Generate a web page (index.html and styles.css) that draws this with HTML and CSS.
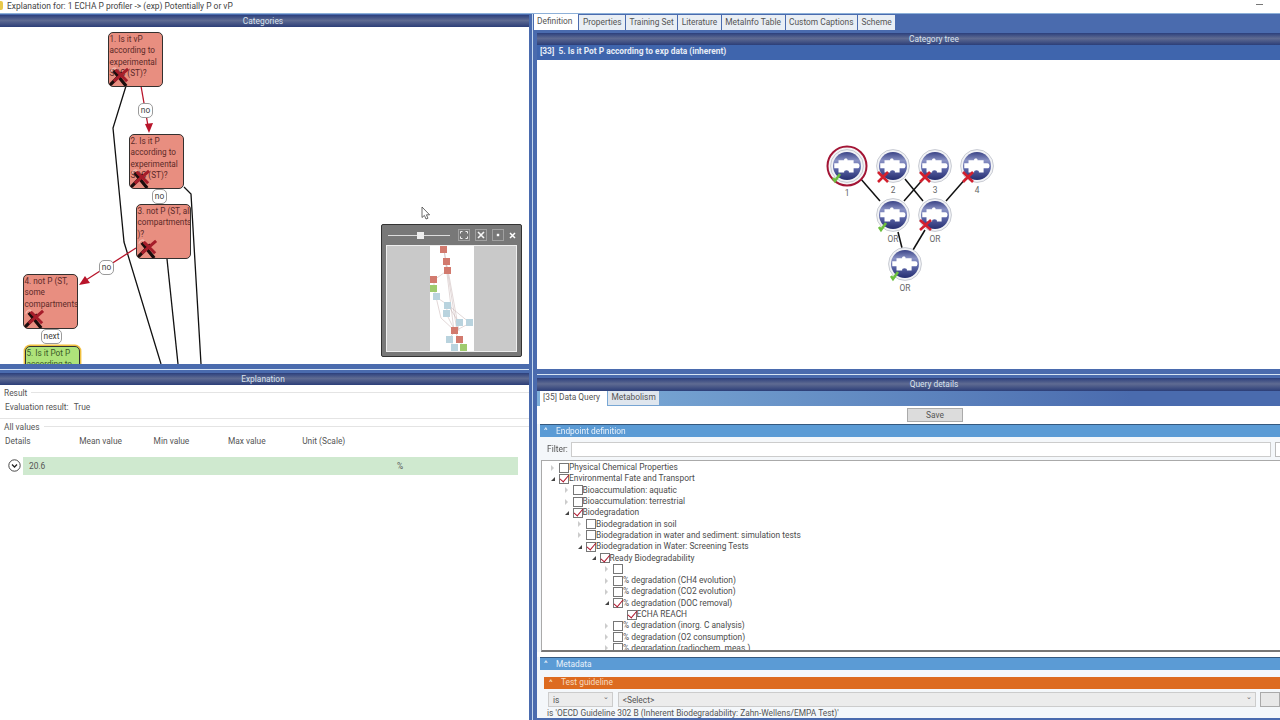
FILE: index.html
```html
<!DOCTYPE html>
<html lang="en">
<head>
<meta charset="utf-8">
<title>Explanation</title>
<link rel="stylesheet" href="styles.css">
</head>
<body>
<svg class="defs" width="0" height="0" aria-hidden="true">
  <defs>
    <symbol id="redx" viewBox="0 0 24 22">
      <path d="M3 6 C4 1 9 1 10 5" fill="none" stroke="#f6d8d0" stroke-width="0.9"/>
      <path d="M1 21 L15 7 M6 5 L19 21" fill="none" stroke="#1c0d0d" stroke-width="3.4"/>
      <path d="M6 16 L21 3 M8 4 L20 16" fill="none" stroke="#a51d2a" stroke-width="3.2"/>
    </symbol>
    <linearGradient id="orb" x1="0" y1="0" x2="0" y2="1">
      <stop offset="0" stop-color="#3a4386"/>
      <stop offset="0.3" stop-color="#8a92c4"/>
      <stop offset="0.6" stop-color="#5a64a6"/>
      <stop offset="1" stop-color="#262e70"/>
    </linearGradient>
    <symbol id="orbnode" viewBox="0 0 36 36">
      <circle cx="18" cy="18" r="17.4" fill="#f2f3f6" stroke="#b8bcc6" stroke-width="0.8"/>
      <circle cx="18" cy="18" r="14.8" fill="url(#orb)"/>
      <path d="M4.5 15 H9 V12 H15 C14 9.5 19.5 9.5 18.5 12 H25 V15 H29 C32 15 32 20.5 29 20.5 H25 V25 H20 C21 21.5 14 21.5 15 25 H9 V20.5 H4.5 Z" fill="#fff"/>
    </symbol>
  </defs>
</svg>
<div class="app">
  <div class="titlebar">
    <span class="appicon"></span>
    <span class="titletext">Explanation for: 1 ECHA P profiler -&gt; (exp) Potentially P or vP</span>
    <span class="minimize"></span>
  </div>
  <div class="workspace">
    <div class="leftcol">
      <div class="topgap"></div>
      <div class="header lefthead">Categories</div>
      <div class="canvas">
        <svg class="edges" width="529" height="337" viewBox="0 27 529 337">
          <polyline class="edge" points="126,86 113,128 119,190 124,242 161,364"/>
          <polyline class="edge" points="184,187 191,194 201,364"/>
          <polyline class="edge" points="167,259 178,364"/>
          <polyline class="redge" points="141,86 148,126"/>
          <polygon class="rhead" points="145,124 153,123 149,133"/>
          <polyline class="redge" points="136,248 86,280"/>
          <polygon class="rhead" points="79,285 85,276 90,283"/>
        </svg>
        <div class="node nred n1">1. Is it vP<br>according to<br>experimental<br>SOC (ST)?<svg class="xmark"><use href="#redx"/></svg></div>
        <div class="node nred n2">2. Is it P<br>according to<br>experimental<br>SOC (ST)?<svg class="xmark"><use href="#redx"/></svg></div>
        <div class="node nred n3">3. not P (ST, all<br>compartments<br>)?<svg class="xmark"><use href="#redx"/></svg></div>
        <div class="node nred n4">4. not P (ST,<br>some<br>compartments<svg class="xmark"><use href="#redx"/></svg></div>
        <div class="node ngreen n5">5. Is it Pot P<br>according to</div>
        <div class="elabel lb1">no</div>
        <div class="elabel lb2">no</div>
        <div class="elabel lb3">no</div>
        <div class="elabel lb4">next</div>
        <svg class="cursor" width="10" height="14" viewBox="0 0 10 14"><path d="M1 1 V11.5 L3.4 9.4 L5 13 L7 12.2 L5.4 8.8 H8.6 Z" fill="#fff" stroke="#444" stroke-width="0.8"/></svg>
        <div class="minimap">
          <div class="mmbar">
            <span class="mmtrack"><span class="mmthumb"></span></span>
            <span class="mmbtn"><svg width="10" height="10" viewBox="0 0 10 10"><path d="M1.5 3.5 V1.5 H3.5 M6.5 1.5 H8.5 V3.5 M8.5 6.5 V8.5 H6.5 M3.5 8.5 H1.5 V6.5" fill="none" stroke="#f2f2f2" stroke-width="1"/></svg></span>
            <span class="mmbtn"><svg width="10" height="10" viewBox="0 0 10 10"><path d="M2 2 L8 8 M8 2 L2 8" fill="none" stroke="#f6f6f6" stroke-width="1.6"/></svg></span>
            <span class="mmbtn"><svg width="10" height="10" viewBox="0 0 10 10"><rect x="3.8" y="3.8" width="2.4" height="2.4" fill="#fff"/></svg></span>
            <span class="mmclose"><svg width="7" height="7" viewBox="0 0 7 7"><path d="M1 1 L6 6 M6 1 L1 6" fill="none" stroke="#fff" stroke-width="1.5"/></svg></span>
          </div>
          <div class="mmview">
            <svg class="mmgraph" width="44" height="107" viewBox="0 0 44 107">
              <g class="mmlines">
                <path d="M14 3 L16 16 L18 24 L4 34 M14 3 L24 85 M16 16 L27 85 M18 24 L29 85 M4 34 L4 42 L6 51 L18 59 L16 67 L25 85 M6 51 L11 72 L25 85 M18 59 L29 77 L25 85 M18 59 L40 77 L25 85 M25 85 L19 93 L25 102 M25 85 L29 94 L34 102"/>
              </g>
              <rect class="mr" x="10" y="0" width="7" height="7"/>
              <rect class="mr" x="13" y="12" width="7" height="7"/>
              <rect class="mr" x="14" y="21" width="7" height="7"/>
              <rect class="mr" x="0" y="30" width="7" height="7"/>
              <rect class="mg" x="0" y="39" width="7" height="7"/>
              <rect class="mb" x="3" y="47" width="7" height="7"/>
              <rect class="mb" x="14" y="56" width="7" height="7"/>
              <rect class="mb" x="13" y="64" width="7" height="7"/>
              <rect class="mb" x="26" y="73" width="7" height="7"/>
              <rect class="mb" x="36" y="73" width="7" height="7"/>
              <rect class="mr" x="21" y="81" width="7" height="7"/>
              <rect class="mb" x="16" y="90" width="7" height="7"/>
              <rect class="mr" x="26" y="90" width="7" height="7"/>
              <rect class="mb" x="21" y="98" width="7" height="7"/>
              <rect class="mg" x="30" y="98" width="7" height="7"/>
            </svg>
          </div>
        </div>
      </div>
      <div class="splitter leftsplit"></div>
      <div class="header lefthead">Explanation</div>
      <div class="explain">
        <div class="legend"><span>Result</span><i></i></div>
        <div class="evalrow"><span>Evaluation result:</span><span>True</span></div>
        <div class="legend second"><span>All values</span><i></i></div>
        <div class="cols">
          <span>Details</span><span>Mean value</span><span>Min value</span><span>Max value</span><span>Unit (Scale)</span>
        </div>
        <div class="valuerow">
          <span class="expander"><svg width="13" height="13" viewBox="0 0 13 13"><circle cx="6.5" cy="6.5" r="5.7" fill="#fff" stroke="#333" stroke-width="0.9"/><path d="M4 5.5 L6.5 8 L9 5.5" fill="none" stroke="#222" stroke-width="1.3"/></svg></span>
          <div class="valuebar"><span class="val">20.6</span><span class="unit">%</span></div>
        </div>
      </div>
    </div>
    <div class="vsplit"></div>
    <div class="rightcol">
      <div class="tabs">
        <span class="tab active">Definition</span>
        <span class="tab">Properties</span>
        <span class="tab">Training Set</span>
        <span class="tab">Literature</span>
        <span class="tab">MetaInfo Table</span>
        <span class="tab">Custom Captions</span>
        <span class="tab">Scheme</span>
      </div>
      <div class="header rheader">Category tree</div>
      <div class="pagetitle">[33]&nbsp; 5. Is it Pot P according to exp data (inherent)</div>
      <div class="treecanvas">
        <svg class="tree" width="743" height="309" viewBox="537 60 743 309">
          <g class="tedge">
            <line x1="860" y1="178" x2="880" y2="201"/>
            <line x1="905" y1="179" x2="923" y2="201"/>
            <line x1="925" y1="177" x2="904" y2="201"/>
            <line x1="967" y1="177" x2="946" y2="201"/>
            <line x1="898" y1="232" x2="902" y2="248"/>
            <line x1="925" y1="230" x2="913" y2="250"/>
          </g>
          <circle class="ring" cx="847" cy="166" r="19.5"/>
          <use href="#orbnode" x="830" y="149" width="34" height="34"/>
          <use href="#orbnode" x="876" y="149" width="34" height="34"/>
          <use href="#orbnode" x="918" y="149" width="34" height="34"/>
          <use href="#orbnode" x="960" y="149" width="34" height="34"/>
          <use href="#orbnode" x="876" y="198" width="34" height="34"/>
          <use href="#orbnode" x="918" y="198" width="34" height="34"/>
          <use href="#orbnode" x="888" y="247" width="34" height="34"/>
          <g class="redmark">
            <path d="M878 172 L888 182 M888 172 L878 182"/>
            <path d="M920 172 L930 182 M930 172 L920 182"/>
            <path d="M963 172 L973 182 M973 172 L963 182"/>
            <path d="M920 220 L931 230 M931 220 L920 230"/>
          </g>
          <g class="greenmark">
            <path d="M833 178 L835 181 L840 174"/>
            <path d="M879 227 L881 230 L886 223"/>
            <path d="M891 276 L893 279 L898 272"/>
          </g>
          <text x="847" y="196">1</text>
          <text x="893" y="193">2</text>
          <text x="935" y="193">3</text>
          <text x="977" y="193">4</text>
          <text x="893" y="242">OR</text>
          <text x="935" y="242">OR</text>
          <text x="905" y="291">OR</text>
        </svg>
      </div>
      <div class="splitter rsplit"></div>
      <div class="header rheader2">Query details</div>
      <div class="qtabs">
        <span class="qtab active">[35] Data Query</span>
        <span class="qtab">Metabolism</span>
      </div>
      <div class="saverow"><span class="savebtn">Save</span></div>
      <div class="section">
        <div class="sechead"><span class="caret">^</span>Endpoint definition</div>
        <div class="filter">
          <span class="filterlabel">Filter:</span><span class="filterinput"></span><span class="filterbtn"></span>
        </div>
        <div class="treebox">
          <div class="row lv0"><i class="arr"></i><b class="cb"></b>Physical Chemical Properties</div>
          <div class="row lv0"><i class="arr open"></i><b class="cb on"></b>Environmental Fate and Transport</div>
          <div class="row lv1"><i class="arr"></i><b class="cb"></b>Bioaccumulation: aquatic</div>
          <div class="row lv1"><i class="arr"></i><b class="cb"></b>Bioaccumulation: terrestrial</div>
          <div class="row lv1"><i class="arr open"></i><b class="cb on"></b>Biodegradation</div>
          <div class="row lv2"><i class="arr"></i><b class="cb"></b>Biodegradation in soil</div>
          <div class="row lv2"><i class="arr"></i><b class="cb"></b>Biodegradation in water and sediment: simulation tests</div>
          <div class="row lv2"><i class="arr open"></i><b class="cb on"></b>Biodegradation in Water: Screening Tests</div>
          <div class="row lv3"><i class="arr open"></i><b class="cb on"></b>Ready Biodegradability</div>
          <div class="row lv4"><i class="arr"></i><b class="cb"></b></div>
          <div class="row lv4"><i class="arr"></i><b class="cb"></b>% degradation (CH4 evolution)</div>
          <div class="row lv4"><i class="arr"></i><b class="cb"></b>% degradation (CO2 evolution)</div>
          <div class="row lv4"><i class="arr open"></i><b class="cb on"></b>% degradation (DOC removal)</div>
          <div class="row lv5"><i class="arr none"></i><b class="cb on"></b>ECHA REACH</div>
          <div class="row lv4"><i class="arr"></i><b class="cb"></b>% degradation (inorg. C analysis)</div>
          <div class="row lv4"><i class="arr"></i><b class="cb"></b>% degradation (O2 consumption)</div>
          <div class="row lv4"><i class="arr"></i><b class="cb"></b>% degradation (radiochem. meas.)</div>
        </div>
      </div>
      <div class="metasection">
        <div class="sechead"><span class="caret">^</span>Metadata</div>
        <div class="metabody">
          <div class="orange"><span class="caret">^</span>Test guideline</div>
          <div class="combos">
            <span class="combo small">is<em>⌄</em></span>
            <span class="combo wide">&lt;Select&gt;<em>⌄</em></span>
            <span class="combobtn"></span>
          </div>
          <div class="cond">is 'OECD Guideline 302 B (Inherent Biodegradability: Zahn-Wellens/EMPA Test)'</div>
        </div>
      </div>
    </div>
  </div>
</div>
</body>
</html>
```
FILE: styles.css
```css
* { box-sizing: border-box; }
html, body { margin: 0; padding: 0; }
body {
  width: 1280px;
  height: 720px;
  overflow: hidden;
  background: #fff;
  font-family: Roboto, "Open Sans", sans-serif;
  font-size: 8.4px;
  color: #555;
}
.defs { position: absolute; }
.app { width: 1280px; height: 720px; display: flex; flex-direction: column; filter: blur(0.3px); }
.titlebar { height: 13px; flex: none; display: flex; align-items: center; background: #fff; position: relative; }
.appicon { width: 3px; height: 9px; margin-top: -3px; margin-right: 4px; background: #e9c94a; border-radius: 0 2px 2px 0; }
.titletext { font-size: 8.45px; color: #444; margin-top: -1px; }
.minimize { position: absolute; right: 17px; top: 4px; width: 7px; height: 1px; background: #777; }

.workspace { flex: 1; min-height: 0; display: flex; background: #4a6bae; border-top: 1px solid #8db0d8; }
.leftcol { width: 529px; flex: none; display: flex; flex-direction: column; }
.vsplit { width: 8px; flex: none; background: linear-gradient(90deg, #4a6bae 0 3px, #c5d8ee 3px 4px, #4a6bae 4px); }
.rightcol { flex: 1; min-width: 0; display: flex; flex-direction: column; }
.topgap { height: 1px; flex: none; }
.header {
  height: 12px;
  flex: none;
  text-align: center;
  line-height: 13px;
  font-size: 8.4px;
  color: #d9e2ee;
  background: linear-gradient(#2b3f7c, #5f6b92 45%, #2c3e78);
}
.lefthead { padding-right: 3px; }
.canvas { height: 337px; flex: none; position: relative; overflow: hidden; background: #fff; }
.edges { position: absolute; left: 0; top: 0; }
.edge { fill: none; stroke: #111; stroke-width: 1.3; }
.redge { fill: none; stroke: #b8142a; stroke-width: 1.3; }
.rhead { fill: #b8142a; }
.node {
  position: absolute;
  width: 55px;
  height: 55px;
  padding: 1px 0 0 0.5px;
  border: 1.4px solid #33302f;
  border-radius: 5px;
  line-height: 11.3px;
  font-size: 8.2px;
  color: #5c2a28;
  overflow: hidden;
  white-space: nowrap;
}
.nred { background: #e88e80; }
.ngreen { background: #aee37a; color: #3b5a28; border: 1.2px solid #333; box-shadow: 0 0 0 1.4px #f0c040; }
.n1 { left: 108px; top: 5px; }
.n2 { left: 129px; top: 107px; }
.n3 { left: 136px; top: 177px; }
.n4 { left: 23px; top: 247px; }
.n5 { left: 25px; top: 319px; }
.xmark { position: absolute; left: -1px; bottom: -1px; width: 23px; height: 21px; }
.elabel {
  position: absolute;
  height: 15px;
  line-height: 13px;
  text-align: center;
  border: 1px solid #9a9a9a;
  border-radius: 5px;
  background: #fff;
  font-size: 8.4px;
  color: #444;
}
.lb1 { left: 138px; top: 76px; width: 15px; }
.lb2 { left: 152px; top: 162px; width: 15px; }
.lb3 { left: 99px; top: 233px; width: 15px; }
.lb4 { left: 41px; top: 302px; width: 21px; }
.cursor { position: absolute; left: 421px; top: 179px; }
.minimap {
  position: absolute;
  left: 381px;
  top: 197px;
  width: 141px;
  height: 133px;
  background: #787878;
  border: 1px solid #333;
  border-radius: 2px;
  display: flex;
  flex-direction: column;
  padding: 0 4px 4px 4px;
}
.mmbar { height: 20px; flex: none; display: flex; align-items: center; gap: 5px; padding-left: 2px; }
.mmtrack { width: 62px; height: 1px; background: #ddd; position: relative; margin-right: 3px; }
.mmthumb { position: absolute; left: 29px; top: -3px; width: 7px; height: 7px; background: #eee; }
.mmbtn { width: 12px; height: 12px; border: 1px solid #a0a0a0; display: flex; }
.mmclose { display: flex; margin-left: 0; }
.mmview { height: 107px; flex: none; border: 1px solid #eee; background: #c9c9c9; display: flex; justify-content: center; overflow: hidden; }
.mmgraph { background: #fff; display: block; flex: none; }
.mmlines path { fill: none; stroke: #c4b0b0; stroke-width: 0.5; }
.mr { fill: #d27a6e; }
.mg { fill: #9fcb6e; }
.mb { fill: #b9d3de; }

.splitter { height: 8px; flex: none; background: linear-gradient(#4a6bae 0 5px, #d7e5f4 5px 6px, #4a6bae 6px); }
.leftsplit { height: 9px; }
.explain { flex: 1; background: #fff; padding: 2px 11px 0 0; }
.legend { display: flex; align-items: center; gap: 4px; height: 11px; padding-left: 4px; }
.legend i { flex: 1; height: 1px; background: #e4e4e4; margin-right: -11px; }
.evalrow { display: flex; gap: 5px; height: 21px; padding: 3.5px 0 0 5px; border-bottom: 1px solid #e4e4e4; margin-right: -11px; }
.second { margin-top: 2px; }
.cols { display: grid; grid-template-columns: repeat(5, 74.3px); padding: 3.5px 0 0 5px; height: 17px; }
.valuerow { display: flex; align-items: center; height: 19px; margin-top: 7px; }
.expander { width: 23px; padding-left: 8px; display: flex; flex: none; }
.expander svg { flex: none; }
.valuebar { flex: 1; height: 18px; background: #cfe9cf; display: flex; align-items: center; padding-left: 6px; }
.val { width: 368px; }

.tabs { height: 17px; flex: none; display: flex; gap: 1px; align-items: flex-start; }
.tab { height: 15px; margin-top: 1px; padding: 0 3.5px; line-height: 14px; background: #e9eef4; font-size: 8.4px; white-space: nowrap; }
.tab.active { background: #fff; height: 16px; margin-top: 0; padding: 0 6px 0 3px; margin-left: -3px; }
.rheader { margin-top: 2px; padding-left: 51px; }
.pagetitle { height: 15px; flex: none; padding-left: 3px; line-height: 13px; font-size: 8.4px; font-weight: 700; color: #e6ecf6; background: #3f65ad; }
.treecanvas { height: 309px; flex: none; background: #fff; }
.tree { display: block; }
.tedge line { stroke: #111; stroke-width: 1.5; }
.ring { fill: #f4f4f6; stroke: #a31535; stroke-width: 2; }
.redmark path { fill: none; stroke: #d3202e; stroke-width: 2.6; }
.greenmark path { fill: none; stroke: #6cbf3e; stroke-width: 2.6; }
.tree text { font-size: 8.4px; fill: #666; text-anchor: middle; font-family: Roboto, sans-serif; }
.rsplit { height: 9px; }
.rheader2 { height: 13px; padding-left: 51px; }
.qtabs { height: 15px; flex: none; display: flex; gap: 1px; padding-left: 3px; background: linear-gradient(90deg, #7fb0da, #4a6bae 80%); }
.qtab { height: 14px; line-height: 13px; padding: 0 3.5px; background: #dfe6ee; font-size: 8.4px; white-space: nowrap; }
.qtab.active { width: 67px; height: 15px; background: #fff; padding: 0 3px; }
.saverow { height: 18px; flex: none; background: #fff; padding: 2px 0 0 370px; }
.savebtn { display: block; width: 56px; height: 14px; line-height: 12px; text-align: center; background: #dcdcdc; border: 1px solid #aaa; }
.section { flex: none; background: #f4f7fa; padding-left: 3px; }
.sechead { height: 13px; line-height: 12px; padding-left: 4px; color: #e8f1fa; background: #5b9bd5; border-top: 1px solid #35597f; font-size: 8.4px; display: flex; }
.caret { width: 12px; font-weight: 700; font-size: 8px; }
.filter { height: 23px; display: flex; align-items: center; padding: 1px 0 0 7px; }
.filterlabel { width: 24px; flex: none; }
.filterinput { width: 700px; flex: none; height: 15px; background: #fff; border: 1px solid #ccc; }
.filterbtn { width: 10px; height: 15px; margin-left: 4px; background: #fff; border: 1px solid #bbb; flex: none; }
.treebox { height: 192px; overflow: hidden; background: #fff; border: 1px solid #aaa; border-right: 0; border-bottom: 2px solid #777; padding-top: 1px; margin-left: 1px; }
.row { height: 11.3px; display: flex; align-items: center; line-height: 11px; white-space: nowrap; font-size: 8.4px; color: #4c4c4c; }
.lv0 { padding-left: 8px; }
.lv1 { padding-left: 21.5px; }
.lv2 { padding-left: 35px; }
.lv3 { padding-left: 48.5px; }
.lv4 { padding-left: 62px; }
.lv5 { padding-left: 75.5px; }
.arr { width: 9px; flex: none; height: 6px; position: relative; }
.arr::before { content: ""; position: absolute; left: 1px; top: 0; border-left: 3px solid #ccc; border-top: 3px solid transparent; border-bottom: 3px solid transparent; }
.arr.open::before { border: 0; border-right: 4px solid #444; border-top: 4px solid transparent; top: 1px; }
.arr.none::before { display: none; }
.cb { width: 10px; height: 10px; flex: none; border: 1px solid #777; background: #fff; position: relative; }
.cb.on::after { content: ""; position: absolute; left: 2.2px; top: -1.5px; width: 4px; height: 7.5px; border: solid #b0142c; border-width: 0 1.7px 1.7px 0; transform: rotate(40deg); }
.metasection { flex: 1; min-height: 0; background: #f4f7fa; margin-top: 5px; padding-left: 3px; border-bottom: 2px solid #4a6bae; overflow: hidden; box-shadow: 0 -5px 0 #fff; }
.metabody { padding: 7px 0 0 4px; }
.orange { height: 12px; line-height: 11px; padding-left: 5px; background: #dd6b20; color: #f6dcc2; font-size: 8.4px; display: flex; }
.combos { display: flex; gap: 5px; margin-top: 3px; height: 15px; padding-left: 4px; }
.combo { height: 15px; line-height: 14px; padding-left: 4px; background: #ececec; border: 1px solid #ccc; display: flex; justify-content: space-between; }
.combo em { font-style: normal; font-size: 7px; padding-right: 3px; line-height: 9px; color: #666; }
.small { width: 65px; }
.wide { width: 642px; }
.combobtn { width: 20px; flex: none; height: 15px; margin-left: -1px; background: #e8e8e8; border: 1px solid #aaa; }
.cond { margin-top: 1px; padding-left: 3px; height: 10px; line-height: 10px; font-size: 8.4px; white-space: nowrap; }
```
